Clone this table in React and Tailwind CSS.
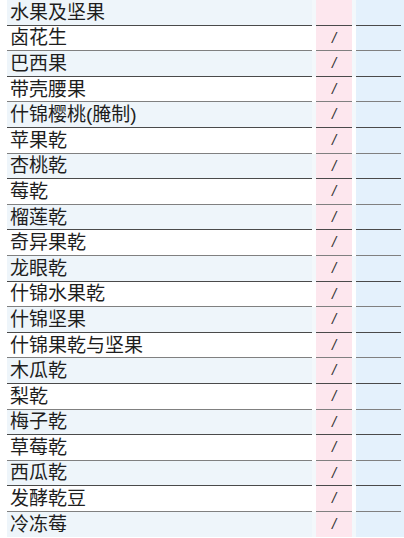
import React from 'react';

const items = [
  '水果及坚果',
  '卤花生',
  '巴西果',
  '带壳腰果',
  '什锦樱桃(腌制)',
  '苹果乾',
  '杏桃乾',
  '莓乾',
  '榴莲乾',
  '奇异果乾',
  '龙眼乾',
  '什锦水果乾',
  '什锦坚果',
  '什锦果乾与坚果',
  '木瓜乾',
  '梨乾',
  '梅子乾',
  '草莓乾',
  '西瓜乾',
  '发酵乾豆',
  '冷冻莓',
];

const Row = ({ name, index }) => {
  const shaded = index % 2 === 0;
  const line = index % 2 === 0 ? 'border-[#4a4a4a]' : 'border-[#808080]';
  const last = index === items.length - 1;
  return (
    <div className="flex h-[25.6px]">
      <div
        className={`ml-[7px] w-[305px] pl-[3px] flex items-center text-[19px] leading-none text-[#1e1e1e] ${shaded ? 'bg-[#eef5fa]' : 'bg-white'} ${last ? '' : `border-b-[1.5px] ${line}`}`}
      >
        {name}
      </div>
      <div className={`w-[4px] ${shaded ? 'bg-[#f3f8fb]' : 'bg-white'}`} />
      <div
        className={`w-[36px] bg-[#fde7ee] flex items-center justify-center text-[15px] italic text-[#333] ${last ? '' : `border-b-[1.5px] ${line}`}`}
      >
        {index === 0 ? '' : '/'}
      </div>
      <div className={`w-[4px] ${shaded ? 'bg-[#f3f8fb]' : 'bg-white'}`} />
      <div className={`w-[45px] bg-[#e4f1fc] ${last ? '' : `border-b-[1.5px] ${line}`}`} />
      <div className="flex-1 bg-[#e4f1fc]" />
    </div>
  );
};

const App = () => {
  return (
    <div
      className="w-[404px] h-[538px] bg-white overflow-hidden"
      style={{ fontFamily: '"Liberation Sans", "Noto Sans CJK SC", sans-serif' }}
    >
      {items.map((name, i) => (
        <Row key={name} name={name} index={i} />
      ))}
    </div>
  );
};

export default App;
